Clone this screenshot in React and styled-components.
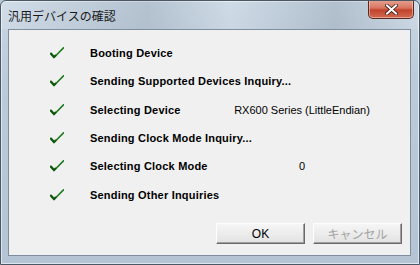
import React from 'react';
import styled, { createGlobalStyle } from 'styled-components';

const GlobalStyle = createGlobalStyle`
  html, body {
    margin: 0;
    padding: 0;
    background: #b8c8d8;
  }
  body {
    font-family: "Liberation Sans", Arial, sans-serif;
  }
`;

const Window = styled.div`
  width: 420px;
  height: 265px;
  box-sizing: border-box;
  display: flex;
  flex-direction: column;
  border: 1px solid #4a5866;
  border-radius: 6px 6px 0 0;
  background: linear-gradient(180deg, #c9d7e4 0%, #bccbd9 30%, #b4c4d4 100%);
  box-shadow: inset 0 0 0 1px rgba(255, 255, 255, 0.55);
  overflow: hidden;
`;

const TitleBar = styled.div`
  height: 28px;
  display: flex;
  align-items: flex-start;
  justify-content: space-between;
  padding-left: 7px;
  padding-right: 5px;
  background: linear-gradient(90deg, rgba(255,255,255,0.15) 0%, rgba(120,135,150,0.25) 35%, rgba(255,255,255,0.1) 55%, rgba(110,125,140,0.25) 80%, rgba(255,255,255,0.1) 100%);
`;

const Title = styled.div`
  margin-top: 7px;
  font-family: "Noto Sans CJK JP", sans-serif;
  font-size: 12px;
  line-height: 15px;
  color: #1a1a1a;
`;

const CloseButton = styled.div`
  width: 46px;
  height: 19px;
  margin-top: -1px;
  box-sizing: border-box;
  border: 1px solid #5a2a22;
  border-top: none;
  border-radius: 0 0 5px 5px;
  background: linear-gradient(180deg, #e8a494 0%, #d8735f 45%, #c2442c 55%, #cf6a50 100%);
  box-shadow: inset 0 0 0 1px rgba(255, 220, 210, 0.5);
  display: flex;
  align-items: center;
  justify-content: center;
`;

const Client = styled.div`
  flex: 1;
  margin: 0 8px 8px 7px;
  box-sizing: border-box;
  border: 1px solid #7e8e9e;
  background: #f0f0f0;
  display: flex;
  flex-direction: column;
`;

const StepList = styled.div`
  display: grid;
  grid-template-columns: 14px 116px 140px;
  grid-auto-rows: 28.33px;
  column-gap: 26px;
  padding: 9px 0 0 41px;
  align-items: center;
`;

const Label = styled.span`
  font-size: 11px;
  font-weight: bold;
  letter-spacing: 0.2px;
  color: #000;
  white-space: nowrap;
`;

const Value = styled.span`
  font-size: 11px;
  color: #000;
  text-align: center;
  white-space: nowrap;
`;

const Footer = styled.div`
  margin-top: auto;
  display: flex;
  justify-content: flex-end;
  gap: 8px;
  padding: 0 8px 11px 0;
`;

const Button = styled.div`
  width: 89px;
  height: 21px;
  box-sizing: border-box;
  display: flex;
  align-items: center;
  justify-content: center;
  font-family: "Liberation Sans", Arial, "Noto Sans CJK JP", sans-serif;
  font-size: 12px;
  color: ${p => (p.$disabled ? '#a3a3a3' : '#000')};
  background: linear-gradient(180deg, #f6f6f6 0%, #ececec 50%, #e2e2e2 100%);
  border-top: 1px solid #fdfdfd;
  border-left: 1px solid #fdfdfd;
  border-right: 1px solid #6a6a6a;
  border-bottom: 1px solid #6a6a6a;
  box-shadow: inset -1px -1px 0 #a0a0a0;
`;

const Check = () => (
  <svg width="14" height="12" viewBox="0 0 14 12">
    <path d="M0.5 6.5 L4 10.5 L13.5 0.8" fill="none" stroke="#1e7a1e" strokeWidth="1.6" strokeLinecap="round" strokeLinejoin="round" />
    <path d="M1 6.5 L4 10 L5.5 8.5" fill="none" stroke="#0f5a0f" strokeWidth="2" strokeLinecap="round" />
  </svg>
);

const steps = [
  { label: 'Booting Device' },
  { label: 'Sending Supported Devices Inquiry...' },
  { label: 'Selecting Device', value: 'RX600 Series (LittleEndian)' },
  { label: 'Sending Clock Mode Inquiry...' },
  { label: 'Selecting Clock Mode', value: '0' },
  { label: 'Sending Other Inquiries' },
];

const App = () => (
  <>
    <GlobalStyle />
    <Window>
      <TitleBar>
        <Title>汎用デバイスの確認</Title>
        <CloseButton>
          <svg width="13" height="11" viewBox="0 0 13 11">
            <path d="M2 1.5 L11 9.5 M11 1.5 L2 9.5" stroke="#3a1a14" strokeWidth="3.6" strokeLinecap="square" />
            <path d="M2 1.5 L11 9.5 M11 1.5 L2 9.5" stroke="#ffffff" strokeWidth="2" strokeLinecap="square" />
          </svg>
        </CloseButton>
      </TitleBar>
      <Client>
        <StepList>
          {steps.map(s => (
            <React.Fragment key={s.label}>
              <Check />
              <Label>{s.label}</Label>
              <Value>{s.value || ''}</Value>
            </React.Fragment>
          ))}
        </StepList>
        <Footer>
          <Button>OK</Button>
          <Button $disabled>キャンセル</Button>
        </Footer>
      </Client>
    </Window>
  </>
);

export default App;
